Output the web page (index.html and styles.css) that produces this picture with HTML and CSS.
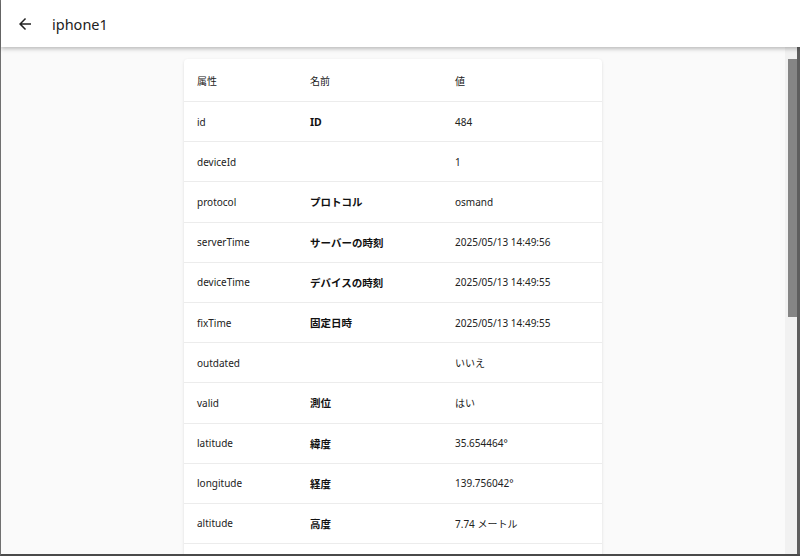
FILE: index.html
```html
<!DOCTYPE html>
<html lang="ja">
<head>
    <meta charset="UTF-8">
    <meta name="viewport" content="width=device-width, initial-scale=1.0">
    <title>iphone1</title>
    <link rel="stylesheet" href="styles.css">
</head>
<body>
    <div class="frame">
        <header class="app-bar">
            <button class="back" aria-label="戻る">
                <svg width="18" height="18" viewBox="0 0 24 24"><path d="M20 11H7.83l5.59-5.59L12 4l-8 8 8 8 1.41-1.41L7.83 13H20v-2z" fill="#222"/></svg>
            </button>
            <h1>iphone1</h1>
        </header>
        <div class="page">
            <main class="content">
                <div class="card">
                    <table>
                        <thead>
                            <tr><th>属性</th><th>名前</th><th>値</th></tr>
                        </thead>
                        <tbody>
                            <tr><td>id</td><td class="name">ID</td><td>484</td></tr>
                            <tr><td>deviceId</td><td class="name"></td><td>1</td></tr>
                            <tr><td>protocol</td><td class="name">プロトコル</td><td>osmand</td></tr>
                            <tr><td>serverTime</td><td class="name">サーバーの時刻</td><td>2025/05/13 14:49:56</td></tr>
                            <tr><td>deviceTime</td><td class="name">デバイスの時刻</td><td>2025/05/13 14:49:55</td></tr>
                            <tr><td>fixTime</td><td class="name">固定日時</td><td>2025/05/13 14:49:55</td></tr>
                            <tr><td>outdated</td><td class="name"></td><td>いいえ</td></tr>
                            <tr><td>valid</td><td class="name">測位</td><td>はい</td></tr>
                            <tr><td>latitude</td><td class="name">緯度</td><td>35.654464°</td></tr>
                            <tr><td>longitude</td><td class="name">経度</td><td>139.756042°</td></tr>
                            <tr><td>altitude</td><td class="name">高度</td><td>7.74 メートル</td></tr>
                            <tr><td>speed</td><td class="name">速度</td><td>0.00 km/h</td></tr>
                        </tbody>
                    </table>
                </div>
            </main>
            <div class="rail">
                <div class="thumb"></div>
            </div>
        </div>
    </div>
</body>
</html>
```
FILE: styles.css
```css
html, body {
    margin: 0;
    height: 100%;
    overflow: hidden;
}
body {
    font-family: 'Noto Sans', 'Noto Sans CJK JP', sans-serif;
    color: #222;
    background-color: #fafafa;
}
.frame {
    display: flex;
    flex-direction: column;
    height: 100%;
    box-sizing: border-box;
    border-left: 1px solid #707070;
    border-bottom: 2px solid #4a4a4a;
}
.app-bar {
    display: flex;
    align-items: center;
    height: 47px;
    flex-shrink: 0;
    background-color: #fff;
    box-shadow: 0 2px 4px rgba(0, 0, 0, 0.25);
    position: relative;
    z-index: 1;
}
.back {
    background: none;
    border: none;
    padding: 0;
    margin: 0 0 0 15px;
    width: 18px;
    height: 18px;
    display: flex;
    align-items: center;
    justify-content: center;
    cursor: pointer;
}
.app-bar h1 {
    margin: 0 0 0 18px;
    font-size: 14.5px;
    font-weight: 400;
    color: #222;
}
.page {
    flex: 1;
    display: flex;
    min-height: 0;
}
.content {
    flex: 1;
    overflow: hidden;
    padding: 12px 0;
}
.rail {
    width: 12px;
    flex-shrink: 0;
    background-color: #f1f1f1;
    border-right: 3px solid #5e5e5e;
}
.thumb {
    margin: 12px 0 0 3px;
    width: 9px;
    height: 258px;
    background-color: #858585;
}
.card {
    max-width: 418px;
    margin: 0 auto;
    background-color: #fff;
    border-radius: 4px;
    box-shadow: 0 1px 3px rgba(0, 0, 0, 0.12);
    overflow: hidden;
}
table {
    width: 100%;
    border-collapse: collapse;
    font-size: 10px;
}
th, td {
    text-align: left;
    padding: 0 12px 0 13px;
    height: 39.2px;
    border-bottom: 1px solid #ececec;
    white-space: nowrap;
}
th {
    height: 42px;
    font-weight: 400;
    color: #222;
}
th:nth-child(1), td:nth-child(1) {
    width: 88px;
}
th:nth-child(2), td:nth-child(2) {
    width: 120px;
}
td {
    color: #222;
}
td.name {
    font-weight: 700;
    font-size: 10.5px;
    color: #111;
}
```
